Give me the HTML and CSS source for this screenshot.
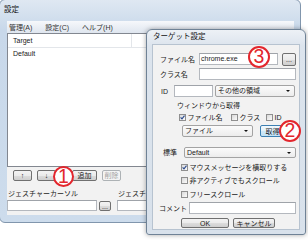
FILE: index.html
```html
<!DOCTYPE html>
<html lang="ja">
<head>
    <meta charset="UTF-8">
    <meta name="viewport" content="width=device-width, initial-scale=1.0">
    <title>設定</title>
    <link rel="stylesheet" href="styles.css">
</head>
<body>

    <!-- Main settings window -->
    <div class="window main-window">
        <div class="titlebar">設定</div>
        <div class="client main-client">
            <div class="menubar">
                <span>管理(A)</span>
                <span>設定(C)</span>
                <span>ヘルプ(H)</span>
            </div>

            <div class="listview">
                <div class="lv-header">
                    <span class="lv-col">Target</span>
                </div>
                <div class="lv-row">Default</div>
            </div>

            <div class="list-buttons">
                <button class="btn btn-up">↑</button>
                <button class="btn btn-down">↓</button>
                <button class="btn btn-add">追加</button>
                <button class="btn btn-delete" disabled>削除</button>
            </div>

            <div class="cursor-fields">
                <div class="cursor-field">
                    <div class="field-label">ジェスチャーカーソル</div>
                    <div class="field-input">
                        <span class="textbox tb-cursor"></span>
                        <button class="btn btn-browse">...</button>
                    </div>
                </div>
                <div class="cursor-field">
                    <div class="field-label">ジェスチャー中カーソル</div>
                    <div class="field-input">
                        <span class="textbox tb-cursor"></span>
                        <button class="btn btn-browse">...</button>
                    </div>
                </div>
            </div>
        </div>
    </div>

    <!-- Target settings dialog -->
    <div class="window dialog">
        <div class="titlebar">ターゲット設定</div>
        <div class="client dialog-client">
            <div class="row row-file">
                <span class="label lbl-name">ファイル名</span>
                <span class="textbox tb-file">chrome.exe</span>
                <button class="btn btn-browse btn-file">...</button>
            </div>
            <div class="row row-class">
                <span class="label lbl-name">クラス名</span>
                <span class="textbox tb-class"></span>
            </div>
            <div class="row row-id">
                <span class="label lbl-id">ID</span>
                <span class="textbox tb-id"></span>
                <span class="combo combo-area">その他の領域</span>
            </div>

            <!-- Get from window -->
            <div class="row row-caption">ウィンドウから取得</div>
            <div class="row row-checks">
                <span class="check-item ci-file">
                    <span class="checkbox"><svg viewBox="0 0 5 5"><path d="M0.6 2.4 L2 3.9 L4.5 0.6" fill="none" stroke="#2b4a8c" stroke-width="1.1"/></svg></span>ファイル名
                </span>
                <span class="check-item ci-class"><span class="checkbox"></span>クラス</span>
                <span class="check-item"><span class="checkbox"></span>ID</span>
            </div>
            <div class="row row-get">
                <span class="combo combo-kind">ファイル</span>
                <button class="btn btn-default btn-get">取得</button>
            </div>

            <div class="row row-std">
                <span class="label lbl-std">標準</span>
                <span class="combo combo-std">Default</span>
            </div>

            <!-- Options -->
            <div class="row row-opt">
                <span class="checkbox"><svg viewBox="0 0 5 5"><path d="M0.6 2.4 L2 3.9 L4.5 0.6" fill="none" stroke="#2b4a8c" stroke-width="1.1"/></svg></span>マウスメッセージを横取りする
            </div>
            <div class="row row-opt"><span class="checkbox"></span>非アクティブでもスクロール</div>
            <div class="row row-opt"><span class="checkbox"></span>フリースクロール</div>

            <div class="row row-comment">
                <span class="label lbl-comment">コメント</span>
                <span class="textbox tb-comment"></span>
            </div>
            <div class="row row-buttons">
                <button class="btn btn-ok">OK</button>
                <button class="btn btn-cancel">キャンセル</button>
            </div>
        </div>
    </div>

    <!-- Red annotation marks -->
    <div class="mark mark-1">1</div>
    <div class="mark mark-2">2</div>
    <div class="mark mark-3">3</div>

</body>
</html>
```

FILE: styles.css
```css
/* Reset margin and padding */
* {
    margin: 0;
    padding: 0;
    box-sizing: border-box;
}

body {
    position: relative;
    width: 308px;
    height: 240px;
    overflow: hidden;
    background-color: #fff;
    font-family: "Liberation Sans", "Noto Sans CJK JP", sans-serif;
    font-size: 7px;
    line-height: 1;
    color: #1a1a1a;
}

button {
    font: inherit;
    color: inherit;
}

/* Window frames (Windows 7 style) */
.window {
    position: absolute;
    display: flex;
    flex-direction: column;
    border: 1px solid #8196ad;
    border-radius: 6px;
    background: linear-gradient(#dfe8f2, #c8d8ea 30px, #cddcec);
}

.titlebar {
    flex: none;
    white-space: nowrap;
    font-size: 7.5px;
    color: #111;
}

.client {
    flex: none;
    background-color: #f2f2f2;
}

/* Main window */
.main-window {
    left: -1px;
    top: -1px;
    width: 302px;
    height: 224px;
}

.main-window .titlebar {
    height: 21px;
    line-height: 19px;
    padding-left: 4px;
}

.main-client {
    height: 194px;
    margin: 0 6px 0 7px;
    display: flex;
    flex-direction: column;
}

.menubar {
    flex: none;
    height: 12px;
    display: flex;
    align-items: center;
    gap: 13px;
    padding-left: 2px;
    background: linear-gradient(#f6f8fb, #dfe6ef);
    color: #333;
}

.listview {
    flex: none;
    height: 134px;
    border: 1px solid #828790;
    background-color: #fff;
}

.lv-header {
    height: 14px;
    display: flex;
    border-bottom: 1px solid #e3e6ea;
}

.lv-col {
    width: 124px;
    padding-left: 5px;
    line-height: 13px;
    border-right: 1px solid #e3e6ea;
}

.lv-row {
    height: 12px;
    line-height: 12px;
    padding-left: 5px;
}

.list-buttons {
    flex: none;
    height: 11px;
    margin-top: 3px;
    padding-left: 6px;
    display: flex;
}

.list-buttons .btn {
    width: 19px;
    height: 11px;
}

.list-buttons .btn-down {
    margin-left: 5px;
}

.list-buttons .btn-add {
    width: 25px;
    margin-left: 16px;
}

.list-buttons .btn-delete {
    margin-left: 5px;
}

.cursor-fields {
    flex: none;
    margin-top: 9px;
    display: flex;
}

.cursor-field {
    width: 104px;
    flex: none;
}

.cursor-field + .cursor-field {
    margin-left: 6px;
}

.field-label {
    height: 8px;
    line-height: 8px;
    padding-left: 1px;
    white-space: nowrap;
}

.field-input {
    margin-top: 2px;
    display: flex;
    align-items: flex-end;
}

.tb-cursor {
    width: 90px;
    height: 11px !important;
}

.field-input .btn-browse {
    width: 12px;
    height: 10px;
    margin-left: 2px;
}

/* Dialog window */
.dialog {
    left: 146px;
    top: 29px;
    width: 160px;
    height: 206px;
    z-index: 1;
    border-color: #6f8296;
    border-radius: 6px 6px 3px 3px;
    background: linear-gradient(#edf1f6, #dce4ed 16px, #d8e1eb);
    box-shadow: 0 0 5px rgba(0, 0, 0, 0.35);
}

.dialog .titlebar {
    height: 15px;
    line-height: 14px;
    padding-left: 6px;
}

.dialog-client {
    height: 184px;
    margin: 0 6px;
    padding-top: 8px;
    display: flex;
    flex-direction: column;
    box-shadow: 0 0 0 1px #b7c3d0;
}

.row {
    flex: none;
    display: flex;
    align-items: center;
    white-space: nowrap;
}

.label {
    flex: none;
}

/* Form controls */
.textbox {
    display: block;
    flex: none;
    height: 12px;
    padding-left: 1px;
    line-height: 10px;
    background-color: #fff;
    border: 1px solid #b4b8be;
    border-top-color: #9fa3a9;
}

.combo {
    position: relative;
    display: block;
    flex: none;
    height: 12px;
    padding-left: 2px;
    line-height: 10px;
    border: 1px solid #a3a3a3;
    border-radius: 2px;
    background: linear-gradient(#fbfbfb, #ececec);
}

.combo::after {
    content: "";
    position: absolute;
    right: 4px;
    top: 4px;
    border-left: 2px solid transparent;
    border-right: 2px solid transparent;
    border-top: 2px solid #111;
}

.btn {
    display: flex;
    flex: none;
    align-items: center;
    justify-content: center;
    border: 1px solid #707070;
    border-radius: 2px;
    background: linear-gradient(#f3f3f3 0%, #ebebeb 50%, #dddddd 51%, #cfcfcf 100%);
    line-height: 1;
}

.btn[disabled] {
    color: #a3a3a3;
    border-color: #adb2b5;
    background: #f4f4f4;
}

.btn-default {
    border-color: #3c7fb1;
    background: linear-gradient(#f1f8fd 0%, #e2f2fb 50%, #d0eafa 51%, #c1e2f6 100%);
}

.checkbox {
    display: flex;
    flex: none;
    align-items: center;
    justify-content: center;
    width: 7px;
    height: 7px;
    margin-right: 1.5px;
    border: 1px solid #8f8f8f;
    background: linear-gradient(135deg, #d9d9d9, #fbfbfb);
}

.checkbox svg {
    width: 5px;
    height: 5px;
}

.check-item {
    display: flex;
    align-items: center;
    flex: none;
}

/* Dialog rows */
.row-file {
    height: 12px;
    padding-left: 7px;
}

.lbl-name {
    width: 39px;
}

.tb-file {
    width: 79px;
}

.btn-file {
    width: 14px;
    height: 13px;
    margin-left: 4px;
}

.row-class {
    height: 12px;
    margin-top: 3px;
    padding-left: 7px;
}

.tb-class {
    width: 97px;
}

.row-id {
    height: 12px;
    margin-top: 5px;
    padding-left: 8px;
}

.lbl-id {
    width: 13px;
}

.tb-id {
    width: 39px;
}

.combo-area {
    width: 80px;
    margin-left: 2px;
}

.row-caption {
    height: 8px;
    margin-top: 4px;
    padding-left: 24px;
}

.row-checks {
    height: 8px;
    margin-top: 4px;
    padding-left: 26px;
}

.ci-file {
    width: 52px;
}

.ci-class {
    width: 35px;
}

.row-get {
    height: 12px;
    margin-top: 4px;
    padding-left: 29px;
}

.combo-kind {
    width: 71px;
}

.btn-get {
    width: 25px;
    height: 12px;
    margin-left: 7px;
}

.row-std {
    height: 11px;
    margin-top: 10px;
    padding-left: 10px;
}

.lbl-std {
    width: 21px;
}

.combo-std {
    width: 112px;
    height: 11px;
    line-height: 9px;
}

.row-opt {
    height: 10px;
    margin-top: 3.5px;
    padding-left: 28px;
}

.row-std + .row-opt {
    margin-top: 4px;
}

.row-comment {
    height: 12px;
    margin-top: 3px;
    padding-left: 6px;
}

.lbl-comment {
    width: 30px;
}

.tb-comment {
    width: 107px;
}

.row-buttons {
    height: 10px;
    margin-top: 4px;
    padding-left: 28px;
}

.btn-ok {
    width: 48px;
    height: 10px;
}

.btn-cancel {
    width: 42px;
    height: 10px;
    margin-left: 4px;
}

/* Red annotation marks */
.mark {
    position: absolute;
    z-index: 2;
    display: flex;
    align-items: center;
    justify-content: center;
    border: 2px solid #e3262d;
    border-radius: 50%;
    background-color: #fff;
    color: #e3262d;
    font-family: "Liberation Sans", sans-serif;
    font-size: 19.5px;
    line-height: 1;
}

.mark-1 {
    left: 53px;
    top: 166px;
    width: 21px;
    height: 21px;
}

.mark-2 {
    left: 279px;
    top: 120px;
    width: 22px;
    height: 22px;
}

.mark-3 {
    left: 248px;
    top: 46px;
    width: 22px;
    height: 22px;
}
```
